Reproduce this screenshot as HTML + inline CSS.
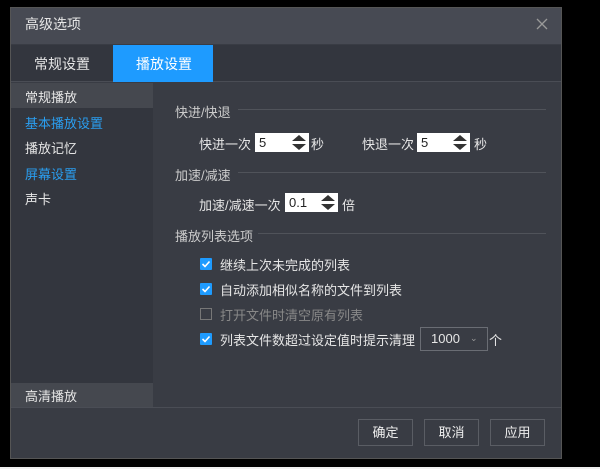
<!DOCTYPE html>
<html><head><meta charset="utf-8"><style>
*{margin:0;padding:0;box-sizing:border-box}
body{width:600px;height:469px;background:#000;position:relative;overflow:hidden;font-family:"Liberation Sans","Noto Sans CJK SC",sans-serif;font-size:13px;color:#e6e6e6}
.a{position:absolute}
.dlg{left:10px;top:7px;width:552px;height:452px;background:#393c44;border:1px solid #555}
.sp{position:absolute;height:19px;background:#fff;color:#222;font-size:13px;padding-left:4px;line-height:19px}
.sp svg{position:absolute;right:2px;top:1px}
.cb{position:absolute;width:12px;height:12px;background:#1e9bff;border-radius:1px}
.cb svg{position:absolute;left:1px;top:1px}
.btn{position:absolute;top:419px;width:55px;height:27px;border:1px solid #5a5d64;text-align:center;line-height:25px;font-size:13px;color:#eee}
.line{position:absolute;height:1px;background:#50535a}
</style></head><body>
<div class="a dlg"></div>
<div class="a" style="left:11px;top:8px;width:550px;height:36px;background:#474a53"></div>
<div class="a" style="left:25px;top:14px;font-size:14px">高级选项</div>
<svg class="a" style="left:536px;top:18px" width="12" height="12"><path d="M1 1L11 11M11 1L1 11" stroke="#999" stroke-width="1.3"/></svg>
<div class="a" style="left:11px;top:45px;width:550px;height:37px;background:#33363e;border-bottom:1px solid #4a4d55"></div>
<div class="a" style="left:113px;top:45px;width:100px;height:37px;background:#1e9bff"></div>
<div class="a" style="left:34px;top:54px;font-size:14px">常规设置</div>
<div class="a" style="left:136px;top:54px;font-size:14px;color:#fff">播放设置</div>
<div class="a" style="left:11px;top:83px;width:142px;height:324px;background:#33363e"></div>
<div class="a" style="left:11px;top:83px;width:142px;height:25px;background:#45484f"></div>
<div class="a" style="left:25px;top:87px">常规播放</div>
<div class="a" style="left:25px;top:113px;color:#2a9ef0">基本播放设置</div>
<div class="a" style="left:25px;top:138px">播放记忆</div>
<div class="a" style="left:25px;top:164px;color:#2a9ef0">屏幕设置</div>
<div class="a" style="left:25px;top:189px">声卡</div>
<div class="a" style="left:11px;top:383px;width:142px;height:24px;background:#45484f"></div>
<div class="a" style="left:25px;top:386px">高清播放</div>
<div class="a" style="left:175px;top:102px;color:#ccc">快进/快退</div>
<div class="line" style="left:238px;top:109px;width:308px"></div>
<div class="a" style="left:199px;top:134px">快进一次</div>
<div class="sp" style="left:255px;top:133px;width:54px">5<svg width="16" height="17"><path d="M1 7L8 1L15 7Z M1 10L8 16L15 10Z" fill="#333"/></svg></div>
<div class="a" style="left:311px;top:134px">秒</div>
<div class="a" style="left:362px;top:134px">快退一次</div>
<div class="sp" style="left:417px;top:133px;width:53px">5<svg width="16" height="17"><path d="M1 7L8 1L15 7Z M1 10L8 16L15 10Z" fill="#333"/></svg></div>
<div class="a" style="left:474px;top:134px">秒</div>
<div class="a" style="left:175px;top:165px;color:#ccc">加速/减速</div>
<div class="line" style="left:238px;top:172px;width:308px"></div>
<div class="a" style="left:199px;top:195px">加速/减速一次</div>
<div class="sp" style="left:285px;top:193px;width:53px">0.1<svg width="16" height="17"><path d="M1 7L8 1L15 7Z M1 10L8 16L15 10Z" fill="#333"/></svg></div>
<div class="a" style="left:342px;top:195px">倍</div>
<div class="a" style="left:175px;top:226px;color:#ccc">播放列表选项</div>
<div class="line" style="left:258px;top:233px;width:288px"></div>
<div class="cb" style="left:200px;top:258px"><svg width="10" height="10"><path d="M1.5 5L4 7.5L8.5 2.5" stroke="#fff" stroke-width="1.6" fill="none"/></svg></div>
<div class="a" style="left:220px;top:255px">继续上次未完成的列表</div>
<div class="cb" style="left:200px;top:283px"><svg width="10" height="10"><path d="M1.5 5L4 7.5L8.5 2.5" stroke="#fff" stroke-width="1.6" fill="none"/></svg></div>
<div class="a" style="left:220px;top:280px">自动添加相似名称的文件到列表</div>
<div class="a" style="left:200px;top:308px;width:12px;height:12px;border:1px solid #777"></div>
<div class="a" style="left:220px;top:305px;color:#888">打开文件时清空原有列表</div>
<div class="cb" style="left:200px;top:333px"><svg width="10" height="10"><path d="M1.5 5L4 7.5L8.5 2.5" stroke="#fff" stroke-width="1.6" fill="none"/></svg></div>
<div class="a" style="left:220px;top:330px">列表文件数超过设定值时提示清理</div>
<div class="a" style="left:420px;top:327px;width:68px;height:24px;border:1px solid #6a6d74;line-height:22px;padding-left:10px">1000<span style="position:absolute;left:49px;top:-1px;font-size:9px;color:#999">&#8964;</span></div>
<div class="a" style="left:489px;top:330px">个</div>
<div class="line" style="left:11px;top:407px;width:550px;background:#4a4d55"></div>
<div class="a" style="left:11px;top:408px;width:550px;height:50px;background:#393c44"></div>
<div class="btn" style="left:358px">确定</div>
<div class="btn" style="left:424px">取消</div>
<div class="btn" style="left:490px">应用</div>
<div class="a" style="left:0;top:467px;width:600px;height:2px;background:#f0f0f0"></div>
</body></html>
